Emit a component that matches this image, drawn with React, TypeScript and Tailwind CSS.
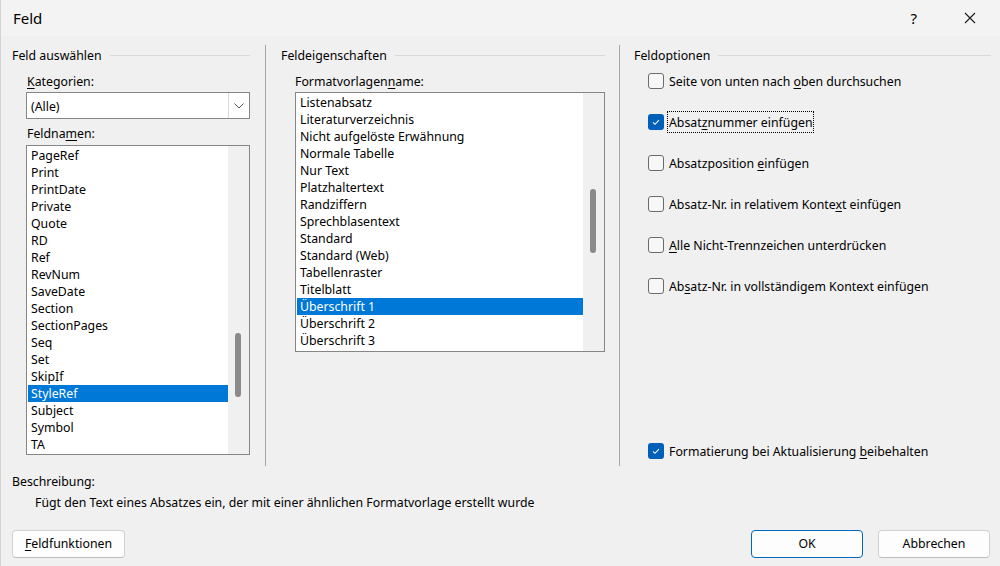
import React from "react";

const leftItems = [
  "PageRef","Print","PrintDate","Private","Quote","RD","Ref","RevNum","SaveDate","Section","SectionPages","Seq","Set","SkipIf","StyleRef","Subject","Symbol","TA",
];
const midItems = [
  "Listenabsatz","Literaturverzeichnis","Nicht aufgelöste Erwähnung","Normale Tabelle","Nur Text","Platzhaltertext","Randziffern","Sprechblasentext","Standard","Standard (Web)","Tabellenraster","Titelblatt","Überschrift 1","Überschrift 2","Überschrift 3",
];

function GroupHeader({ title }: { title: string }) {
  return (
    <div className="mt-[2px] flex h-[16px] items-center">
      <span className="h-[16px] whitespace-nowrap pt-px leading-[15px]">{title}</span>
      <div className="ml-[8px] h-px flex-1 bg-[#d9d9d9]" />
    </div>
  );
}

function Items({ items, selected }: { items: string[]; selected: string }) {
  return (
    <div className="flex flex-col pt-[1px]">
      {items.map((it) => (
        <div
          key={it}
          className={
            it === selected
              ? "ml-[1px] h-[17px] whitespace-nowrap bg-[#0078d7] pl-[3px] pt-px leading-[16px] text-white"
              : "ml-[1px] h-[17px] whitespace-nowrap pl-[3px] pt-px leading-[16px]"
          }
        >
          {it}
        </div>
      ))}
    </div>
  );
}

function Check({ checked }: { checked: boolean }) {
  if (checked) {
    return (
      <div className="flex h-[16px] w-[16px] shrink-0 items-center justify-center rounded-[3px] bg-[#005fb8]">
        <svg width="16" height="16" viewBox="0 0 16 16">
          <polyline points="5,8.3 7,10.3 11,6.2" fill="none" stroke="white" strokeWidth="1.1" />
        </svg>
      </div>
    );
  }
  return <div className="h-[16px] w-[16px] shrink-0 rounded-[3px] border border-[#6b6b6b] bg-[#f7f7f7]" />;
}

function Option({ checked, children, focus }: { checked: boolean; children: React.ReactNode; focus?: boolean }) {
  return (
    <div className="ml-[14px] flex h-[16px] items-center">
      <Check checked={checked} />
      {focus ? (
        <span className="ml-[3px] whitespace-nowrap border border-dotted border-black px-[1px] pb-[2px] pt-[3px] leading-[15px]">
          {children}
        </span>
      ) : (
        <span className="ml-[5px] h-[16px] whitespace-nowrap pt-px leading-[15px]">{children}</span>
      )}
    </div>
  );
}

export default function App() {
  return (
    <div className="relative flex h-[566px] w-[1000px] flex-col overflow-hidden border-l border-[#d4d4d4] bg-[#f0f0f0] font-['Noto_Sans',sans-serif] text-[12.3px] text-black">
      {/* title bar */}
      <div className="flex h-[36px] shrink-0 items-center bg-[#f3f3f3]">
        <span className="ml-[12px] text-[15px] leading-[20px]">Feld</span>
        <div className="flex-1" />
        <span className="mr-[47px] text-[15px] leading-[20px]">?</span>
        <svg width="12" height="12" viewBox="0 0 12 12" className="mr-[24px]">
          <path d="M1 1 L11 11 M11 1 L1 11" stroke="#1a1a1a" strokeWidth="1.1" fill="none" />
        </svg>
      </div>

      {/* columns */}
      <div className="mt-[9px] flex h-[421px] shrink-0 pl-[11px]">
        {/* left column */}
        <div className="flex w-[238px] flex-col">
          <GroupHeader title="Feld auswählen" />
          <div className="ml-[15px] mt-[10px] h-[16px] pt-px leading-[15px]">
            <u className="underline-offset-2">K</u>ategorien:
          </div>
          <div className="ml-[14px] mt-[3px] flex h-[27px] w-[224px] items-center border border-[#868686] bg-white">
            <span className="ml-[4px] h-[16px] flex-1 pt-px leading-[15px]">(Alle)</span>
            <div className="flex h-[25px] w-[21px] items-center justify-center border-l border-[#dadada] bg-white">
              <svg width="10" height="6" viewBox="0 0 10 6">
                <polyline points="0.5,0.5 5,5 9.5,0.5" fill="none" stroke="#555" strokeWidth="1" />
              </svg>
            </div>
          </div>
          <div className="ml-[15px] mt-[6px] h-[16px] pt-px leading-[15px]">
            Feldna<u className="underline-offset-2">m</u>en:
          </div>
          <div className="ml-[14px] mt-[4px] flex h-[310px] w-[224px] border border-[#868686] bg-white">
            <div className="w-[201px] overflow-hidden bg-white">
              <Items items={leftItems} selected="StyleRef" />
            </div>
            <div className="relative w-[21px] bg-[#f0f0f0]">
              <div className="absolute left-[7px] top-[187px] h-[64px] w-[6px] rounded-[3px] bg-[#8a8a8a]" />
            </div>
          </div>
        </div>

        <div className="ml-[15px] w-px bg-[#a6a6a6]" />

        {/* middle column */}
        <div className="ml-[15px] flex w-[324px] flex-col">
          <GroupHeader title="Feldeigenschaften" />
          <div className="ml-[14px] mt-[10px] h-[16px] pt-px leading-[15px]">
            Formatvorlagen<u className="underline-offset-2">n</u>ame:
          </div>
          <div className="ml-[14px] mt-[3px] flex h-[260px] w-[310px] border border-[#868686] bg-white">
            <div className="w-[287px] overflow-hidden bg-white">
              <Items items={midItems} selected="Überschrift 1" />
            </div>
            <div className="relative w-[21px] bg-[#f0f0f0]">
              <div className="absolute left-[7px] top-[96px] h-[64px] w-[6px] rounded-[3px] bg-[#8a8a8a]" />
            </div>
          </div>
        </div>

        <div className="ml-[14px] w-px bg-[#a6a6a6]" />

        {/* right column */}
        <div className="ml-[14px] flex w-[357px] flex-col pb-[7px]">
          <GroupHeader title="Feldoptionen" />
          <div className="mt-[10px] flex flex-col gap-[25px]">
            <Option checked={false}>
              Seite von unten nach <u className="underline-offset-2">o</u>ben durchsuchen
            </Option>
            <Option checked focus>
              Absat<u className="underline-offset-2">z</u>nummer einfügen
            </Option>
            <Option checked={false}>
              Absatzposition <u className="underline-offset-2">e</u>infügen
            </Option>
            <Option checked={false}>
              Absatz-Nr. in relativem Konte<u className="underline-offset-2">x</u>t einfügen
            </Option>
            <Option checked={false}>
              <u className="underline-offset-2">A</u>lle Nicht-Trennzeichen unterdrücken
            </Option>
            <Option checked={false}>
              Ab<u className="underline-offset-2">s</u>atz-Nr. in vollständigem Kontext einfügen
            </Option>
          </div>
          <div className="flex-1" />
          <Option checked>
            Formatierung bei Aktualisierung <u className="underline-offset-2">b</u>eibehalten
          </Option>
        </div>
      </div>

      {/* description */}
      <div className="ml-[11px] mt-[7px] h-[16px] pt-px leading-[15px]">Beschreibung:</div>
      <div className="ml-[34px] mt-[5px] h-[16px] pt-px leading-[15px]">
        Fügt den Text eines Absatzes ein, der mit einer ähnlichen Formatvorlage erstellt wurde
      </div>

      {/* buttons */}
      <div className="mt-[20px] flex pl-[11px] pr-[10px]">
        <button className="flex h-[28px] w-[113px] items-center justify-center rounded-[4px] border border-[#d1d1d1] border-b-[#bdbdbd] bg-[#fdfdfd]">
          <span>
            <u className="underline-offset-2">F</u>eldfunktionen
          </span>
        </button>
        <div className="flex-1" />
        <button className="flex h-[28px] w-[112px] items-center justify-center rounded-[4px] border border-[#0067c0] bg-[#fdfdfd]">
          OK
        </button>
        <button className="ml-[15px] flex h-[28px] w-[112px] items-center justify-center rounded-[4px] border border-[#d1d1d1] border-b-[#bdbdbd] bg-[#fdfdfd]">
          Abbrechen
        </button>
      </div>
    </div>
  );
}
